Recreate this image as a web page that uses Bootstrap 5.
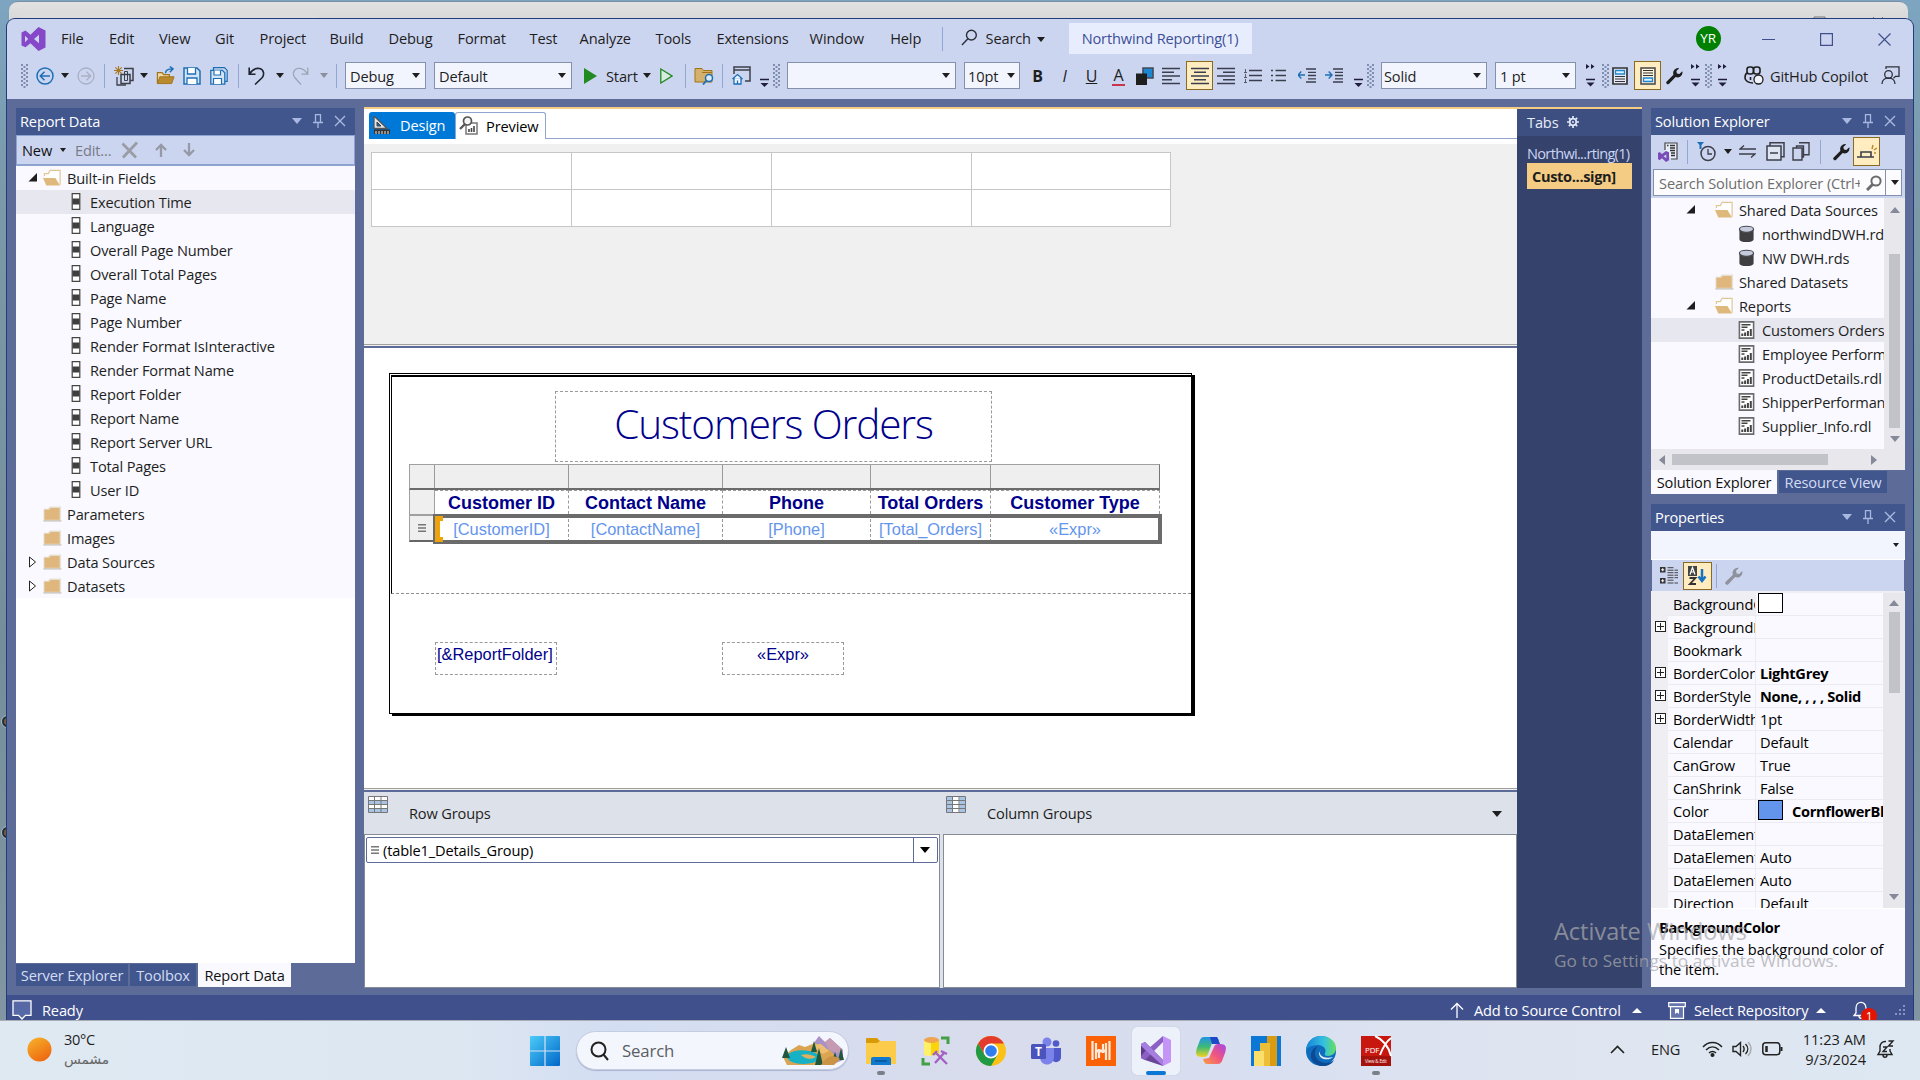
<!DOCTYPE html>
<html lang="en">
<head>
<meta charset="utf-8">
<title>Northwind Reporting(1) - Visual Studio</title>
<link href="https://cdn.jsdelivr.net/npm/bootstrap@5.3.0/dist/css/bootstrap.min.css" rel="stylesheet">
<script src="https://cdn.jsdelivr.net/npm/bootstrap@5.3.0/dist/js/bootstrap.bundle.min.js"></script>
<style>
:root{--shell:#5d6b99;--bar:#ccd5f0;--title:#40568d;--pane:#f9f9ff;--status:#40508d;--gold:#f5cc84}
body{width:1920px;height:1080px;overflow:hidden;font:14.6px/20px "Open Sans","Noto Sans",sans-serif;letter-spacing:-.15px;color:#1e1e1e;background:linear-gradient(#7da5c1,#7b99a8 18%,#768e9c 60%,#8397a3);white-space:nowrap}
svg{display:block;flex:none;overflow:visible}
.s20{width:20px;height:20px}.s16{width:16px;height:16px}
.behind{left:9px;top:1px;width:1899px;height:40px;background:linear-gradient(#e2e2e2,#cacaca);border-radius:9px 9px 0 0;border-top:1px solid #7d8fa5}
.behind .ghost-tab{margin:12px 0 0 11px;width:300px;height:20px;background:#dcdcdc;border-radius:8px}
.ghost-btns{left:1801px;top:14px}
.vs{margin:18px 0 0 6px;width:1908px;height:1002px;border:1px solid #203c7c;border-bottom:0;border-radius:9px 9px 0 0;background:var(--shell);overflow:hidden;position:relative}
.menubar{height:40px;background:var(--bar);display:grid;align-items:center;padding-left:14px;
grid-template-columns:40px 48px 50px 56px 44.6px 70px 59px 69px 72px 50px 76px 61px 93px 80.6px 51.4px 19px 25px 51px 32px 627px 66px 58px 58px 30px}
.menubar>span{margin-top:-2px}
.menubar>.proj{background:#e8edfd;color:#3b4f97;width:183px;height:31px;line-height:31px;text-align:center;margin-top:-1px}
.menubar>.yr{width:25px;height:25px;background:#008000;color:#fff;border-radius:50%;text-align:center;line-height:25px;font-size:13.5px;margin-top:-1px}
.tools{height:40px;background:var(--bar);display:grid;align-items:center;padding:0 0 7px 14px;
grid-template-columns:15px 25px 16px 27px 10px 26px 16px 27px 27px 28px 10px 28px 16px 28px 16px 9px 89px 150px 22px 37px 17px 25px 9px 28px 10px 28px 13px 14px 177px 67px 27px 27px 27px 24px 26px 24px 31px 27px 27px 27px 27px 29px 13px 14px 114px 91px 16px 10px 22px 32px 25px 14px 13px 26px 26px 111px 24px}
.vsep{width:1px;height:24px;background:#92a7d3}
.combo{height:27px;background:#f2f5fe;border:1px solid #8390ae;padding:0 5px 0 4px;display:flex;align-items:center;justify-content:space-between}
.w81{width:81px}.w138{width:138px}.w169{width:169px}.w56{width:56px;padding:0 4px 0 3px}.w106{width:106px;padding-left:2px}
.dd{width:0;height:0;border:4px solid transparent;border-top:5px solid #1e1e1e;border-bottom:0}
.dd.fade1{border-top-color:#8b8f9c}
.dd.pale{border-width:6px 5px 0;border-top-color:#a9b8e0}
.dd.big{border-width:6px 5px 0;border-top-color:#000}
.dd.tiny{border-width:4px 3px 0}
.du{width:0;height:0;border:5px solid transparent;border-bottom:5px solid #fff;border-top:0}
.on{background:#ffecc0;border:1px solid #8a6a1f;width:27px;height:29px;display:flex;align-items:center;justify-content:center}
.grip{width:7px;height:24px;background:radial-gradient(circle at 1px 1px,#7f8db0 1px,transparent 1.2px) 0 0/5px 4px,radial-gradient(circle at 1px 1px,#7f8db0 1px,transparent 1.2px) 2.5px 2px/5px 4px}
.fmt{width:13px;text-align:center;font-size:16px}
.fontcol{border-bottom:2px solid #c8364a;line-height:18px}
.work{height:896px;display:flex}
.left-col{margin:9px 0 0 9px;width:339px}
.pane-title{height:27px;background:var(--title);color:#fff;display:flex;align-items:center;padding:0 9px 2px 4px;gap:11px}
.rd-tools{height:31px;background:var(--bar);border:1px solid #8fa3d0;border-width:1px 1px 2px;padding-left:5px;color:#111}
.rd-edit{color:#777b86;margin:0 10px 0 9px}
.tree{background:var(--pane)}
.tnode{height:24px;display:flex;align-items:center;padding-bottom:1px}
.tnode.sel{background:#e7e7ef}
.tnode .exp{width:10px;margin-left:12px;margin-right:5px}
.tnode .fold{margin-right:5px}
.tnode.kid{padding-left:55px}
.tnode.kid svg{margin-right:9px}
.rd-blank{height:365px;background:#fff}
.btabs{display:flex;gap:2px;height:24px}
.btabs>span{background:var(--title);color:#d4dcf4;height:22px;margin-top:1px;line-height:22px;text-align:center}
.btabs>.act{background:var(--pane);color:#111;height:24px;margin-top:0;line-height:24px}
.w112{width:112px}.w66{width:66px}.w93{width:93px}.w126{width:126px}.w108{width:108px}
.center{margin:8px 0 0 9px;width:1278px;border-top:2px solid var(--gold);height:881px;display:flex}
.doc{width:1153px}
.viewtabs{height:35px;background:#fff;display:flex;padding:3px 0 5px 5px;align-items:stretch}
.vt{display:flex;align-items:center;border-radius:3px 3px 0 0;padding-bottom:1px}
.vt.design{width:86px;background:#0078d7;color:#fff;padding-left:4px;gap:9px}
.vt.preview{width:91px;border:1px solid #8fa5cf;border-bottom:0;padding-left:3px;gap:8px;color:#000}
.vtrest{flex:1;border-bottom:1px solid #94a6cd}
.params{height:200px;background:#f0f0f0;padding:8px 0 0 7px}
.pgrid{display:grid;grid-template:37px 37px/200px 200px 200px 199px;width:800px;border:solid #c6c6c6;border-width:1px 0 0 1px}
.pgrid>div{background:#fff;border:solid #c6c6c6;border-width:0 1px 1px 0}
.split{height:4px;border-top:1px solid #a0a0a0;border-bottom:2px solid var(--shell);background:#f0f0f0}
.canvas{height:440px;background:#fff;position:relative}
.page{left:25px;top:25px;width:803px;height:341px;border:1px solid #000;box-shadow:3px 2px 0 #000;background:#fff}
.page .bodyarea{height:219px;border-left:1px solid #000;border-top:2px solid #000;border-bottom:1px dashed #8d8d8d;margin:1px 0 0 1px}
.tbx{border:1px dashed #9a9a9a;color:#00008b;font-family:"Liberation Sans",Arial,sans-serif;letter-spacing:0;text-align:center}
.rtitle{left:191px;top:43px;width:437px;height:71px;font:300 40.5px/64px "Open Sans",sans-serif;letter-spacing:-1.1px}
.tablix{left:45px;top:116px;width:751px;letter-spacing:0;font-family:"Liberation Sans",Arial,sans-serif}
.trow{display:grid;grid-template-columns:26px 134px 154px 148px 120px 169px;text-align:center}
.trow>*{overflow:hidden}
.th1{height:26px;border:1px solid #a0a0a0;border-bottom:2px solid #6b6b6b;border-right-color:#777;grid-template-columns:25px 134px 154px 148px 120px 168px}
.th1>*{background:#efefef;border-right:1px solid #9a9a9a}.th1>:last-child{border:0}
.th2{height:24px;font-weight:700;font-size:18px;line-height:26px;color:#00008b}
.th2>*,.th3>*{border-right:1px dashed #999}
.hcell{background:#efefef;border:solid #a0a0a0!important;border-width:0 1px 0 1px!important}
.th2>:nth-child(n+2){border-top:1px dashed #999;line-height:25px}
.th3{height:28px;font-size:16.4px;line-height:30px;color:#6495ed}
.th3 .hcell{border-width:2px 1px 2px 1px!important;border-bottom-color:#666!important;height:28px;display:flex;align-items:center;justify-content:center}
.selrow{left:24px;top:50px;width:729px;height:30px;border:4px solid #6b6b6b}
.selmark{left:-2px;top:-2px;width:8px;height:26px;border:solid #eea30c;border-width:5px 0 5px 5px}
.rfolder,.rexpr{top:294px;width:122px;height:33px;font-size:16.4px;line-height:23px}
.rfolder{left:71px;text-align:left;padding-left:1px}
.rexpr{left:358px}
.groups{height:42px;background:#dde1e9;display:flex}
.groups>div{display:flex}
.rowg-half{width:578px}
.glabel{margin:11px 0 0 21px;line-height:20px}
.gdd{margin:19px 15px 0 auto;border-width:6px 5px 0}
.gboxes{height:154px;display:flex;gap:3px;background:#dde1e9}
.gbox{background:#fff;border:1px solid #868b95;flex:1}
.gbox:first-child{flex:0 0 575.5px}
.gcombo{margin:2px 1px 0;height:26px;border:1px solid #5d6b99;border-radius:2px;color:#000}
.gbtn{margin-left:auto;border-left:1px solid #5d6b99;width:24px;height:24px;display:flex;align-items:center;justify-content:center}
.tabwell{width:125px;background:#35426b;color:#cad4f3;height:879px}
.tabwell .hd{height:27px;background:#3d4f80;padding:0 0 2px 10px;gap:9px;color:#e8ecfa}
.nwr{padding:7px 0 0 10px;height:27px;letter-spacing:-.7px}
.custo{margin:0 0 0 10px;width:105px;height:26px;background:var(--gold);color:#1e1e1e;font-weight:700;padding-left:5px;line-height:26px;letter-spacing:-.35px}
.right-col{margin:9px 0 0 9px;width:254px}
.se-tools{height:33px;background:var(--bar);display:grid;align-items:center;padding-left:7px;grid-template-columns:29px 10px 27px 15px 27px 26px 28px 9px 24px 28px}
.se-search{height:30px;background:var(--bar);padding:1px 3px 2px 2px}
.se-search>div{height:27px;width:249px;background:#fcfcfe;border:1px solid #8390ae;color:#6d6d6d}
.se-search .txt{width:206px;overflow:hidden;padding-left:5px;letter-spacing:-.12px}
.se-search .txt+svg{margin-left:6px}
.sdiv{width:1px;height:25px;background:#8390ae;margin:0 5px 0 3px}
.se-body{height:251px;display:flex}
.se-body .tree{width:233px;overflow:hidden}
.se-body .tnode .exp{margin-left:35px;margin-right:19px}
.se-body .tnode.kid{padding-left:87px}
.se-body .tnode.kid svg{margin-right:7px}
.scrl{background:#e8e8ec;width:21px;display:flex;flex-direction:column;align-items:center}
.thumb{background:#c2c3c9;width:11px}
.se-v .tri.u{margin-top:9px}.se-v .thumb{height:174px;margin:41px 0 8px}
.pr-v{width:22px}.pr-v .tri.u{margin-top:7px}.pr-v .thumb{height:81px;margin:6px 0 201px}
.tri{border:5px solid transparent;width:0;height:0}
.tri.u{border-width:0 5px 6px;border-bottom-color:#868999}.tri.d{border-width:6px 5px 0;border-top-color:#868999}
.tri.l{border-width:5px 6px 5px 0;border-right-color:#868999}.tri.r{border-width:5px 0 5px 6px;border-left-color:#868999}
.hs{height:21px;background:#e8e8ec;padding-left:8px}
.hs .thumb{width:156px;height:11px;margin:0 43px 0 7px}
.mt10{margin-top:10px}
.pdrop{height:29px;background:#f2f5fe;padding-right:6px;border-bottom:1px solid #fff}
.ptools{height:31px;background:var(--bar);margin:0 1px;padding:1px 0 1px 8px}
.azbtn{width:29px;height:28px;margin-left:1px}
.dim{color:#8f929c}
.pbody{height:317px;display:flex;background:#eeeef3;color:#000;padding-top:2px}
.plist{width:232px;overflow:hidden}
.prow{display:grid;grid-template-columns:17px 88px 127px;height:23px}
.prow>*{overflow:hidden;line-height:22px}
.prow .n{background:var(--pane);border:solid #ebebf1;border-width:0 1px 1px 0;padding-left:5px}
.prow:first-child .n{background:#eeeef3}
.prow .v{background:var(--pane);border-bottom:1px solid #ebebf1;padding-left:4px;display:flex}
.prow .b{font-weight:700;letter-spacing:-.3px}
.plus{width:11px;height:11px;border:1px solid #222;margin:5px 0 0 4px;background:linear-gradient(#222,#222) 50% 50%/7px 1px no-repeat,linear-gradient(#222,#222) 50% 50%/1px 7px no-repeat #fff}
.sw{width:25px;height:20px;border:1px solid #000;margin:0 9px 0 -2px;flex:none}
.pdesc{height:79px;background:var(--pane);padding:8px 0 0 8px;color:#000;border-top:1px solid #fff}
.pdesc b{letter-spacing:-.35px}
.dtxt{white-space:normal;margin-top:2px;letter-spacing:-.05px}
.statusbar{height:25px;background:var(--status);color:#fff;overflow:hidden;padding:5px 6px 0 5px}
.rdy{margin-left:10px}
.stright{margin-left:auto;display:grid;align-items:center;grid-template-columns:24px 158px 36px 26px 122px 37px 42px 12px}
.cnt{left:8px;top:7px;width:16px;height:16px;border-radius:50%;background:#e51400;color:#fff;font-size:12px;line-height:17px;text-align:center}
.water{left:1547px;top:896px;color:#a9a9ad;opacity:.72;font-size:23.5px;line-height:32px;letter-spacing:0}
.water div+div{font-size:17.2px;line-height:28px;letter-spacing:.08px}
.taskbar{height:60px;background:linear-gradient(90deg,#dfe9f2 0,#dde7f2 24%,#d3def2 31%,#d6ddf0 40%,#d8dcec 52%,#d8dff0 66%,#dfe5f0 80%,#dde8f2);border-top:1px solid #a9adb7;position:relative}
.weather{left:27px;top:8px;line-height:20px;letter-spacing:-.3px}
.arab{font-family:"DejaVu Sans","Noto Sans",sans-serif;font-size:13.8px;color:#666}
.pill{width:273px;height:39px;border-radius:20px;background:#f3f6fc;border:1px solid #c5cde1;box-shadow:0 1px 1px #aab4cf;font-size:16.8px;color:#5b5d63}
.pill .mag{margin:0 13px}
.apps{left:530px;top:0;height:59px}
.applist{margin-left:8px}
.app{width:30px;height:30px}
.appbox{width:48px;height:48px;display:flex;align-items:center;justify-content:center;position:relative;margin-right:7px}
.appbox.live{background:#edf1fa;border-radius:5px;box-shadow:0 0 1px #a8afc2}
.appbox i{position:absolute;bottom:0;height:4px;width:8px;border-radius:2px;background:#7b7f88}
.appbox.live i{width:20px;background:#0a78d4}
.tray{left:1610px;top:8px;line-height:20px}
.tgrid{display:grid;align-items:center;height:40px;grid-template-columns:41px 51px 30px 30px 21px 83px 12px}
.clk{text-align:right;letter-spacing:0}
.tgrid .order-last{margin-left:11px}
.edge-mark{left:2px;width:10px;height:11px;border:2px solid #22303a;border-radius:50%;background:#7a5a3c;box-shadow:0 0 0 1px #a5b6c2}
.em1{top:716px}.em2{top:827px}
</style>
</head>
<body>
<svg width="0" height="0" class="position-absolute" fill="none" stroke-linecap="butt">
<defs>
<symbol id="vslogo" viewBox="0 0 24 24"><path fill="#8647c8" fill-rule="evenodd" d="M17 0l7 3.400v17.200L17 24l-8-7.700-5 4L0 18.400V5.600l4-2L9 7.700zM17.500 7.800L12.500 12l5 4.200zM3.500 8.800v6.400L6.700 12z"/></symbol>
<symbol id="search" viewBox="0 0 18 18"><g fill="none" stroke="#2b2f3a" stroke-width="1.500"><circle cx="11" cy="6.500" r="5.200"/><path d="M7.300 10.300L1 17"/></g></symbol>
<symbol id="min" viewBox="0 0 13 13"><path d="M0 6.500h13" stroke="#414f8c" stroke-width="1.200"/></symbol>
<symbol id="max" viewBox="0 0 13 13"><path d="M.6.600h11.800v11.800H.6z" fill="none" stroke="#414f8c" stroke-width="1.200"/></symbol>
<symbol id="cls" viewBox="0 0 13 13"><path d="M.5.500l12 12M12.500.500l-12 12" stroke="#414f8c" stroke-width="1.200"/></symbol>
<symbol id="back" viewBox="0 0 18 18"><g fill="none" stroke="#1c6fb5" stroke-width="1.500"><circle cx="9" cy="9" r="8"/><path d="M14 9H4.500M8.500 4.800L4.300 9l4.200 4.200"/></g></symbol>
<symbol id="fwd" viewBox="0 0 18 18"><g fill="none" stroke="#a9b0c4" stroke-width="1.300"><circle cx="9" cy="9" r="8"/><path d="M4 9h9.500M9.500 4.800L13.700 9l-4.200 4.200"/></g></symbol>
<symbol id="newp" viewBox="0 0 20 20"><g fill="none"><path d="M4.500 0v9M0 4.500h9M1.300 1.300l6.400 6.400M7.700 1.300L1.300 7.700" stroke="#a9781c" stroke-width="1.100"/><path d="M10 2.500h9v12h-3M7 8.500h9v9H7z" stroke="#3c3f48" stroke-width="1.500"/><path d="M3 11v8h9" stroke="#3c3f48" stroke-width="1.300"/><path d="M10.500 5.500h3v9h-3z" stroke="#3c3f48"/></g></symbol>
<symbol id="open" viewBox="0 0 20 20"><path d="M1.500 18V6.500h5l1.500 2h6V11" fill="#f2dba8" stroke="#a1741b" stroke-width="1.300"/><path d="M1.500 18L4 10.800h15L16.500 18z" fill="#b98a2e" stroke="#a1741b"/><path d="M10 7c0-3 2-4.500 7-4.500M14.500 0l3.500 2.500L14.500 6" fill="none" stroke="#1c6fb5" stroke-width="1.500"/></symbol>
<symbol id="save" viewBox="0 0 18 18"><path d="M1 1h13l3 3v13H1z" fill="#d5e4f5" stroke="#1c6fb5" stroke-width="1.500"/><path d="M4.500 1v6h8V1M4 17v-6h10v6" fill="#fff" stroke="#1c6fb5" stroke-width="1.300"/></symbol>
<symbol id="saveall" viewBox="0 0 18 18"><path d="M3.500 3V.700h11l2.700 2.700v11H15" fill="none" stroke="#1c6fb5" stroke-width="1.200"/><path d="M.8 3.300h11.500l2.500 2.500v11.400H.800z" fill="#d5e4f5" stroke="#1c6fb5" stroke-width="1.300"/><path d="M4 3.500V8h6.500V3.500M3.500 17v-5.500h8V17" fill="#fff" stroke="#1c6fb5" stroke-width="1.200"/></symbol>
<symbol id="undo" viewBox="0 0 17 18"><path d="M1.200.500v6.700h6.300M1.500 7C4 3 7.500.800 11.500 1.500c4.500 1 5 6 2.800 9L7 17.500" fill="none" stroke="#1e2430" stroke-width="1.600"/></symbol>
<symbol id="redo" viewBox="0 0 17 18"><path d="M15.800.500v6.700H9.500M15.500 7C13 3 9.500.800 5.500 1.500c-4.500 1-5 6-2.800 9L9 17.500" fill="none" stroke="#9ba2b5" stroke-width="1.200"/></symbol>
<symbol id="play" viewBox="0 0 13 16"><path d="M0 0l13 8L0 16z" fill="#218a21"/></symbol>
<symbol id="playo" viewBox="0 0 13 16"><path d="M.8 1L12 8 .8 15z" fill="#d9ecdf" stroke="#218a21" stroke-width="1.300"/></symbol>
<symbol id="ffind" viewBox="0 0 20 18"><path d="M1 15V1.500h7l1.500 2H18V15z" fill="#d4b06a" stroke="#a1741b"/><path d="M8 5.500h10" stroke="#a1741b"/><circle cx="15" cy="11" r="3.500" fill="#dcebfa" stroke="#1c6fb5" stroke-width="1.500"/><path d="M12.500 13.500L9 17.500" stroke="#1c6fb5" stroke-width="1.800"/></symbol>
<symbol id="whome" viewBox="0 0 19 19"><path d="M2 8V1h16v14h-5M2 4h16" fill="none" stroke="#3c3f48" stroke-width="1.500"/><path d="M.5 13L5.500 8.500l5 4.500M2 12v6h7v-6M5.500 18v-3.500" fill="#f2f7ff" stroke="#1c6fb5" stroke-width="1.300"/></symbol>
<symbol id="ovf" viewBox="0 0 9 24"><path d="M0 15.500h9" stroke="#1e1e3c" stroke-width="1.500"/><path d="M.5 19h8l-4 4z" fill="#1e1e3c"/></symbol>
<symbol id="ovf2" viewBox="0 0 9 24"><path d="M0 0l3.500 2.500L0 5zM5 0l3.500 2.500L5 5z" fill="#1e1e3c"/><path d="M0 15.500h9" stroke="#1e1e3c" stroke-width="1.500"/><path d="M.5 18.500h8l-4 4z" fill="#1e1e3c"/></symbol>
<symbol id="cols" viewBox="0 0 18 18"><path d="M7 1h10v10H7z" fill="#1c86d1" stroke="#444a58" stroke-width="1.600"/><path d="M0 6.500h11V18H0z" fill="#1e1e1e"/></symbol>
<symbol id="al" viewBox="0 0 18 18"><path d="M0 1.500h18M0 5.200h12M0 9h18M0 12.800h10M0 16.500h18" stroke="#3a3f4e" stroke-width="1.400"/></symbol>
<symbol id="ac" viewBox="0 0 18 18"><path d="M0 1.500h18M3 5.200h12M0 9h18M3 12.800h12M0 16.500h18" stroke="#3a3f4e" stroke-width="1.400"/></symbol>
<symbol id="ar" viewBox="0 0 18 18"><path d="M0 1.500h18M6 5.200h12M0 9h18M6 12.800h12M0 16.500h18" stroke="#3a3f4e" stroke-width="1.400"/></symbol>
<symbol id="ol" viewBox="0 0 18 15"><path d="M5 2.500h13M5 7.500h13M5 12.500h13" stroke="#3a3f4e" stroke-width="1.400"/><path d="M1.500 1v3.500M1.500 6v3.500M1.500 11v3.500M0 4.500h3M0 9.500h3M0 14.500h3" stroke="#3a3f4e" stroke-width=".8"/></symbol>
<symbol id="ul" viewBox="0 0 15 15"><path d="M4.500 2.500h11M4.500 7.500h11M4.500 12.500h11M0 2.500h2M0 7.500h2M0 12.500h2" stroke="#3a3f4e" stroke-width="1.400"/></symbol>
<symbol id="outd" viewBox="0 0 18 15"><path d="M0 7h7M3.300 3.500L0 7l3.300 3.500" fill="none" stroke="#1c6fb5" stroke-width="1.400"/><path d="M8 1h10M10 4.300h8M10 7.500h8M10 10.800h8M8 14h10" stroke="#3a3f4e" stroke-width="1.300"/></symbol>
<symbol id="ind" viewBox="0 0 18 15"><path d="M0 7h7M3.700 3.500L7 7l-3.300 3.500" fill="none" stroke="#1c6fb5" stroke-width="1.400"/><path d="M8 1h10M10 4.300h8M10 7.500h8M10 10.800h8M8 14h10" stroke="#3a3f4e" stroke-width="1.300"/></symbol>
<symbol id="hdr" viewBox="0 0 16 18"><path d="M1 1h14v16H1z" fill="#e6ebf7" stroke="#333" stroke-width="1.700"/><path d="M3.500 3.500h9v3.500h-9z" fill="#e3f1ff" stroke="#1c86d1" stroke-width="1.300"/><path d="M3 9.500h10M3 12h10M3 14.500h10" stroke="#333" stroke-width="1.200"/></symbol>
<symbol id="ftr" viewBox="0 0 16 18"><path d="M1 1h14v16H1z" fill="#fdf3dc" stroke="#444" stroke-width="1.500"/><path d="M3.500 11h9v3.500h-9z" fill="#e3f1ff" stroke="#1c86d1" stroke-width="1.300"/><path d="M3 3.500h10M3 6h10M3 8.500h10" stroke="#333" stroke-width="1.200"/></symbol>
<symbol id="wrench" viewBox="0 0 18 18"><path d="M17.500 5.500a5.300 5.300 0 0 1-7.300 4.600L3.300 17.200a1.700 1.700 0 0 1-2.500-2.500L7.900 7.800A5.300 5.300 0 0 1 14 .8l-3 3 .6 2.600 2.600.6 3-3z" fill="currentColor"/></symbol>
<symbol id="copilot" viewBox="0 0 20 19"><g fill="none" stroke="#1e1e1e" stroke-width="1.600"><rect x="3" y="1" width="6.500" height="7" rx="2.500"/><rect x="9.500" y="1" width="6.500" height="7" rx="2.500"/><path d="M3 7c-2 1-2 3-2 5 0 3 4 5 8 5M6.500 11v3"/></g><circle cx="14.500" cy="13.500" r="4.500" fill="#f0f3fc" stroke="#1e1e1e" stroke-width="1.300"/></symbol>
<symbol id="feed" viewBox="0 0 19 19"><g fill="none" stroke="#2c303b" stroke-width="1.300"><circle cx="7.500" cy="8.500" r="3.800"/><path d="M1 18c0-4 3-6 6.500-6s6.500 2 6.500 6M5 3V.8h13v9.500h-3.500l-2 2"/></g></symbol>
<symbol id="pin" viewBox="0 0 10 14"><path d="M2.500 0v8.500M7.500 0v8.500M2 .6h6M0 8.500h10M5 8.500V14" fill="none" stroke="#a9b8e0" stroke-width="1.300"/></symbol>
<symbol id="pcls" viewBox="0 0 12 12"><path d="M1 1l10 10M11 1L1 11" stroke="#a9b8e0" stroke-width="1.400"/></symbol>
<symbol id="delx" viewBox="0 0 18 18"><path d="M1.500 2.500L15 16.500M16 1.500L2 16.500" stroke="#9a9da6" stroke-width="2.800"/></symbol>
<symbol id="up" viewBox="0 0 12 14"><path d="M6 14V2M1 7l5-5 5 5" fill="none" stroke="#969aa6" stroke-width="2.300"/></symbol>
<symbol id="down" viewBox="0 0 12 14"><path d="M6 0v12M1 7l5 5 5-5" fill="none" stroke="#969aa6" stroke-width="2.300"/></symbol>
<symbol id="fopen" viewBox="0 0 20 18"><path d="M1.500 7V4.500h4l2-3.500h10.500v15" fill="#fff" stroke="#e2c796" stroke-width="1.300"/><path d="M0 9h13l5 8H3.500z" fill="#dfb87c"/></symbol>
<symbol id="fold" viewBox="0 0 20 18"><path d="M.5 3.500L5 3.500 7 1h12v15.500H.5z" fill="#e7e0d2"/><path d="M1.500 4.500h5L8 2.800h9.500V15h-16z" fill="#dfb67c"/><path d="M.5 16.300h19" stroke="#bdbab5"/></symbol>
<symbol id="field" viewBox="0 0 9 17"><path d="M.7.700h7.600v15.600H.7z" fill="#fff" stroke="#444" stroke-width="1.200"/><path d="M1 5.500h7v6H1z" fill="#3f3f3f"/></symbol>
<symbol id="xo" viewBox="0 0 10 10"><path d="M9 0v8.500H.5z" fill="#1e1e1e"/></symbol>
<symbol id="xc" viewBox="0 0 10 12"><path d="M1.500 1v10l6-5z" fill="#fff" stroke="#222"/></symbol>
<symbol id="db" viewBox="0 0 18 18"><path d="M1.500 3.500v11c0 4 15 4 15 0v-11z" fill="#3f3f42"/><ellipse cx="9" cy="4" rx="7.500" ry="3.200" fill="#c5cbdc" stroke="#4a4a4d" stroke-width="1.300"/></symbol>
<symbol id="rdl" viewBox="0 0 16 18"><path d="M.9.900h14.200v16.200H.9z" fill="#fff" stroke="#6b6b6f" stroke-width="1.600"/><path d="M3 3.700h9M3 6.300h6M3 9h3" stroke="#444" stroke-width="1.400"/><path d="M3.800 15v-2.500M6.600 15v-3.500M9.400 15v-5M12.300 15V8" stroke="#444" stroke-width="2"/></symbol>
<symbol id="ruler" viewBox="0 0 18 18"><path d="M1 0v12.500h13z" fill="#e6e6e6" stroke="#555" stroke-width="1.300"/><path d="M4 6v4h4z" fill="#0078d7" stroke="#3c3c3c"/><path d="M1 13.500h16V18H1z" fill="#333"/><path d="M3 18v-3M6 18v-3M9 18v-3M12 18v-3M15 18v-3" stroke="#eee"/></symbol>
<symbol id="prev" viewBox="0 0 19 19"><path d="M7 7h11v11H7z" fill="#fff" stroke="#777" stroke-width="1.500"/><path d="M10 16v-3M12.500 16v-4M15 16v-6" stroke="#444" stroke-width="1.600"/><circle cx="8.500" cy="5" r="4" fill="#f5f5f5" stroke="#555" stroke-width="1.700"/><path d="M6 8l-5 5" stroke="#555" stroke-width="2.300"/></symbol>
<symbol id="gear" viewBox="0 0 12 12"><circle cx="6" cy="6" r="3.300" fill="none" stroke="#dfe5f8" stroke-width="1.800"/><path d="M6 0v3M6 9v3M0 6h3M9 6h3M1.800 1.800l2 2M8.200 8.200l2 2M10.200 1.800l-2 2M3.800 8.200l-2 2" stroke="#dfe5f8" stroke-width="1.700"/><circle cx="6" cy="6" r="1" fill="#dfe5f8"/></symbol>
<symbol id="rowg" viewBox="0 0 20 17"><path d="M.5.500h19v16H.5z" fill="#fff" stroke="#777"/><path d="M1 5h18v3.500H1zM1 12.500h18V16H1z" fill="#a9c3e4"/><path d="M0 4.500h20M0 8.500h20M0 12.500h20M6.500 0v17M13 0v17" stroke="#777"/></symbol>
<symbol id="colg" viewBox="0 0 20 17"><path d="M.5.500h19v16H.5z" fill="#fff" stroke="#777"/><path d="M1 1h5.500v15H1zM13.500 1H19v15h-5.500z" fill="#a9c3e4"/><path d="M0 4.500h20M0 8.500h20M0 12.500h20M6.500 0v17M13 0v17" stroke="#777"/></symbol>
<symbol id="burg" viewBox="0 0 8 8"><path d="M0 .700h8M0 4h8M0 7.300h8" stroke="#777" stroke-width="1.400"/></symbol>
<symbol id="vsdoc" viewBox="0 0 20 20"><path d="M7 8V1h12v16h-6" fill="#e9edf8" stroke="#444" stroke-width="1.200"/><path d="M9 3.500h1.500M12 3.500h5M12 6h5M12 8.500h5M13 11h4M13 13.500h4" stroke="#333" stroke-width="1.300"/><path d="M8 9l3 1.300v8L8 20l-4-3.800-2.500 2L0 17v-6l1.500-1L4 12zM8.300 12.500L5.500 14.300l2.800 2z" fill="#7a4cb8" fill-rule="evenodd"/></symbol>
<symbol id="clock" viewBox="0 0 20 20"><path d="M0 0h7L4.500 3v4h-2V3z" fill="#1c6fb5"/><circle cx="11" cy="11.500" r="7" fill="none" stroke="#3c3f48" stroke-width="1.500"/><path d="M11 7v5h4" fill="none" stroke="#3c3f48" stroke-width="1.300"/></symbol>
<symbol id="swap" viewBox="0 0 17 13"><path d="M17 4H1l4-3.500M0 9h16l-4 3.500" fill="none" stroke="#3c3f48" stroke-width="1.400"/></symbol>
<symbol id="coll" viewBox="0 0 19 19"><path d="M4 4V.8h14v14h-3" fill="none" stroke="#3c3f48" stroke-width="1.500"/><path d="M1 4h14v14H1zM4 11h8" fill="#dfe4f2" stroke="#3c3f48" stroke-width="1.500"/></symbol>
<symbol id="copies" viewBox="0 0 18 19"><path d="M7 .800h10v12h-5.500" fill="none" stroke="#3c3f48" stroke-width="1.400"/><path d="M4.500 6V4H11.500v11H10M1 6h9v12H1z" fill="none" stroke="#3c3f48" stroke-width="1.400"/></symbol>
<symbol id="prevw" viewBox="0 0 20 16"><path d="M4 8h10v5H4zM0 13h17" fill="none" stroke="#3c3f48" stroke-width="1.600"/><path d="M15 5l1-4M17 6l3-2M17 9h2" stroke="#b58a24" stroke-width="1.400"/></symbol>
<symbol id="magn" viewBox="0 0 16 16"><circle cx="10" cy="6" r="4.600" fill="none" stroke="#6b6b6b" stroke-width="2"/><path d="M6.500 9.500L1 15" stroke="#6b6b6b" stroke-width="3"/></symbol>
<symbol id="cat" viewBox="0 0 18 17"><path d="M0 0h5.500v5.500H0zM0 11h5.500v5.500H0z" fill="#333"/><path d="M1.200 2.800h3M2.700 1.200v3M1.200 13.800h3M2.700 12.200v3" stroke="#fff"/><path d="M7.500.700h6M7.500 3.200h6M7.500 5.700h6M7.500 8.200h6M7.500 10.700h6M7.500 13.200h6M7.500 16h6M14.500 3.200H18M14.500 5.700H18M14.500 8.200H18M14.500 10.700H18M14.500 16H18" stroke="#444"/></symbol>
<symbol id="az" viewBox="0 0 19 19"><path d="M0 0h9v10H0z" fill="#444"/><path d="M2 8.500l2.500-7 2.500 7M3 6h3" fill="none" stroke="#fff" stroke-width="1.200"/><path d="M1.500 12h6l-5.500 6h6" fill="none" stroke="#333" stroke-width="1.800"/><path d="M14 3v11M10.500 10.500L14 15l3.500-4.500" fill="none" stroke="#1573c4" stroke-width="2.500"/></symbol>
<symbol id="msg" viewBox="0 0 20 20"><path d="M1 .800h18v14.500h-5.500L10 19l-3.500-3.700H1z" fill="#5669a6" stroke="#fff" stroke-width="1.300"/></symbol>
<symbol id="arru" viewBox="0 0 14 16"><path d="M7 16V1.500M1 7.500l6-6 6 6" fill="none" stroke="#fff" stroke-width="1.300"/></symbol>
<symbol id="repo" viewBox="0 0 18 17"><path d="M.7.700h16.600v4H.7zM2.500 5v11.300h13V5" fill="#6676ac" stroke="#fff" stroke-width="1.200"/><path d="M7 7v5l2-1.500 2 1.500V7z" fill="#fff"/></symbol>
<symbol id="bell" viewBox="0 0 16 18"><path d="M1 14.500h14L13 12V7C13 -.5 3 -.5 3 7v5zM6 15c0 3 4 3 4 0" fill="none" stroke="#fff" stroke-width="1.300"/></symbol>
</defs>
</svg>

<div class="behind position-absolute overflow-hidden"><div class="ghost-tab"></div>
<svg class="ghost-btns position-absolute" width="90" height="14" fill="none" stroke="#777"><path d="M4 1h11v12H4zM63 1l10 11M73 1L63 12"/></svg></div>
<div class="edge-mark em1 position-absolute"></div><div class="edge-mark em2 position-absolute"></div>

<div class="vs">
  <div class="menubar">
    <svg width="25" height="24"><use href="#vslogo"/></svg>
    <span>File</span><span>Edit</span><span>View</span><span>Git</span><span>Project</span><span>Build</span><span>Debug</span><span>Format</span><span>Test</span><span>Analyze</span><span>Tools</span><span>Extensions</span><span>Window</span><span>Help</span>
    <i class="vsep"></i><svg width="17" height="17" class="mb-1"><use href="#search"/></svg><span>Search</span><i class="dd"></i>
    <span class="proj">Northwind Reporting(1)</span>
    <span class="yr">YR</span><svg width="13" height="13"><use href="#min"/></svg><svg width="13" height="13"><use href="#max"/></svg><svg width="13" height="13"><use href="#cls"/></svg>
  </div>
  <div class="tools">
    <i class="grip"></i><svg width="18" height="18"><use href="#back"/></svg><i class="dd"></i><svg width="18" height="18"><use href="#fwd"/></svg><i class="vsep"></i>
    <svg class="s20"><use href="#newp"/></svg><i class="dd"></i><svg width="19" height="20"><use href="#open"/></svg><svg width="18" height="18"><use href="#save"/></svg><svg width="18" height="18"><use href="#saveall"/></svg><i class="vsep"></i>
    <svg width="17" height="18"><use href="#undo"/></svg><i class="dd"></i><svg width="17" height="18"><use href="#redo"/></svg><i class="dd fade1"></i><i class="vsep"></i>
    <div class="combo w81">Debug<i class="dd"></i></div><div class="combo w138">Default<i class="dd"></i></div>
    <svg width="13" height="16"><use href="#play"/></svg><span>Start</span><i class="dd"></i><svg width="13" height="16"><use href="#playo"/></svg><i class="vsep"></i>
    <svg width="20" height="18"><use href="#ffind"/></svg><i class="vsep"></i><svg width="19" height="19"><use href="#whome"/></svg><svg width="9" height="24"><use href="#ovf"/></svg><i class="grip"></i>
    <div class="combo w169"><span></span><i class="dd"></i></div><div class="combo w56">10pt<i class="dd"></i></div>
    <b class="fmt">B</b><i class="fmt">I</i><u class="fmt">U</u><span class="fmt fontcol">A</span>
    <svg width="18" height="18"><use href="#cols"/></svg><svg width="18" height="18"><use href="#al"/></svg><div class="on"><svg width="18" height="18"><use href="#ac"/></svg></div><svg width="18" height="18"><use href="#ar"/></svg>
    <svg width="18" height="15"><use href="#ol"/></svg><svg width="15" height="15"><use href="#ul"/></svg><svg width="18" height="15"><use href="#outd"/></svg><svg width="18" height="15"><use href="#ind"/></svg>
    <svg width="9" height="24"><use href="#ovf"/></svg><i class="grip"></i>
    <div class="combo w106">Solid<i class="dd"></i></div><div class="combo w81">1 pt<i class="dd"></i></div>
    <svg width="9" height="24"><use href="#ovf2"/></svg><i class="grip"></i><svg width="16" height="18"><use href="#hdr"/></svg><div class="on"><svg width="16" height="18"><use href="#ftr"/></svg></div>
    <svg width="17" height="18"><use href="#wrench"/></svg><svg width="9" height="24"><use href="#ovf2"/></svg><i class="grip"></i><svg width="9" height="24"><use href="#ovf2"/></svg>
    <svg width="20" height="19"><use href="#copilot"/></svg><span>GitHub Copilot</span><svg width="19" height="19"><use href="#feed"/></svg>
  </div>

  <div class="work">
    <div class="left-col">
      <div class="pane-title">Report Data<i class="dd pale ms-auto"></i><svg width="10" height="14"><use href="#pin"/></svg><svg width="12" height="12"><use href="#pcls"/></svg></div>
      <div class="rd-tools d-flex align-items-center">New<i class="dd tiny ms-2"></i><span class="rd-edit">Edit...</span><svg width="18" height="18"><use href="#delx"/></svg><svg width="12" height="14" class="ms-3"><use href="#up"/></svg><svg width="12" height="14" class="ms-3"><use href="#down"/></svg></div>
      <div class="tree" id="fields"></div>
      <div class="rd-blank"></div>
      <div class="btabs"><span class="w112">Server Explorer</span><span class="w66">Toolbox</span><span class="act w93">Report Data</span></div>
    </div>

    <div class="center">
      <div class="doc">
        <div class="viewtabs"><div class="vt design"><svg width="18" height="18"><use href="#ruler"/></svg>Design</div><div class="vt preview"><svg width="19" height="19"><use href="#prev"/></svg>Preview</div><div class="vtrest"></div></div>
        <div class="params"><div class="pgrid"><div></div><div></div><div></div><div></div><div></div><div></div><div></div><div></div></div></div>
        <div class="split"></div>
        <div class="canvas">
          <div class="page position-absolute"><div class="bodyarea"></div></div>
          <div class="tbx rtitle position-absolute">Customers Orders</div>
          <div class="tablix position-absolute">
            <div class="trow th1"><div></div><div></div><div></div><div></div><div></div><div></div></div>
            <div class="trow th2"><div class="hcell"></div><div>Customer ID</div><div>Contact Name</div><div>Phone</div><div>Total Orders</div><div>Customer Type</div></div>
            <div class="trow th3"><div class="hcell"><svg width="8" height="8"><use href="#burg"/></svg></div><div>[CustomerID]</div><div>[ContactName]</div><div>[Phone]</div><div>[Total_Orders]</div><div>«Expr»</div></div>
            <div class="selrow position-absolute"><div class="selmark position-absolute"></div></div>
          </div>
          <div class="tbx rfolder position-absolute">[&amp;ReportFolder]</div>
          <div class="tbx rexpr position-absolute">«Expr»</div>
        </div>
        <div class="split"></div>
        <div class="groups"><div class="rowg-half"><svg width="20" height="17" class="ms-1 mt-1"><use href="#rowg"/></svg><span class="glabel">Row Groups</span></div><div class="flex-fill"><svg width="20" height="17" class="ms-1 mt-1"><use href="#colg"/></svg><span class="glabel">Column Groups</span><i class="dd gdd"></i></div></div>
        <div class="gboxes"><div class="gbox"><div class="gcombo d-flex align-items-center ps-1"><svg width="8" height="8" class="me-1"><use href="#burg"/></svg>(table1_Details_Group)<span class="gbtn"><i class="dd big"></i></span></div></div><div class="gbox"></div></div>
      </div>
      <div class="tabwell"><div class="hd d-flex align-items-center">Tabs<svg width="12" height="12"><use href="#gear"/></svg></div><div class="nwr">Northwi...rting(1)</div><div class="custo">Custo...sign]</div></div>
    </div>

    <div class="right-col">
      <div class="pane-title">Solution Explorer<i class="dd pale ms-auto"></i><svg width="10" height="14"><use href="#pin"/></svg><svg width="12" height="12"><use href="#pcls"/></svg></div>
      <div class="se-tools"><svg class="s20"><use href="#vsdoc"/></svg><i class="vsep"></i><svg class="s20"><use href="#clock"/></svg><i class="dd"></i><svg width="17" height="13"><use href="#swap"/></svg><svg width="19" height="19"><use href="#coll"/></svg><svg width="18" height="19"><use href="#copies"/></svg><i class="vsep"></i><svg width="17" height="18" class="ms-1"><use href="#wrench"/></svg><div class="on"><svg width="20" height="16"><use href="#prevw"/></svg></div></div>
      <div class="se-search"><div class="d-flex align-items-center"><span class="txt">Search Solution Explorer (Ctrl+;)</span><svg width="16" height="16"><use href="#magn"/></svg><span class="sdiv"></span><i class="dd"></i></div></div>
      <div class="se-body"><div class="tree" id="sol"></div><div class="scrl se-v"><i class="tri u"></i><i class="thumb"></i><i class="tri d"></i></div></div>
      <div class="hs d-flex align-items-center"><i class="tri l"></i><i class="thumb"></i><i class="tri r"></i></div>
      <div class="btabs"><span class="act w126">Solution Explorer</span><span class="w108">Resource View</span></div>
      <div class="pane-title mt10">Properties<i class="dd pale ms-auto"></i><svg width="10" height="14"><use href="#pin"/></svg><svg width="12" height="12"><use href="#pcls"/></svg></div>
      <div class="pdrop d-flex align-items-center justify-content-end"><i class="dd tiny"></i></div>
      <div class="ptools d-flex align-items-center"><svg width="18" height="17" class="me-1"><use href="#cat"/></svg><div class="on azbtn"><svg width="19" height="19"><use href="#az"/></svg></div><i class="vsep ms-1 me-2"></i><svg width="18" height="18" class="dim"><use href="#wrench"/></svg></div>
      <div class="pbody"><div class="plist" id="props"></div><div class="scrl pr-v"><i class="tri u"></i><i class="thumb"></i><i class="tri d"></i></div></div>
      <div class="pdesc"><b class="d-block">BackgroundColor</b><div class="dtxt">Specifies the background color of<br>the item.</div></div>
    </div>
  </div>

  <div class="statusbar d-flex align-items-center"><svg class="s20"><use href="#msg"/></svg><span class="rdy">Ready</span>
    <span class="stright"><svg width="14" height="16"><use href="#arru"/></svg><span>Add to Source Control</span><i class="du"></i><svg width="18" height="17"><use href="#repo"/></svg><span>Select Repository</span><i class="du"></i><span class="position-relative"><svg width="16" height="18"><use href="#bell"/></svg><span class="cnt position-absolute">1</span></span><svg width="10" height="10" fill="#8794c4"><path d="M8 0h2v2H8zM4 4h2v2H4zM8 4h2v2H8zM0 8h2v2H0zM4 8h2v2H4zM8 8h2v2H8z"/></svg></span>
  </div>
  <div class="water position-absolute"><div>Activate Windows</div><div>Go to Settings to activate Windows.</div></div>
</div>

<div class="taskbar">
  <div class="weather position-absolute d-flex align-items-center">
    <svg width="25" height="25" class="me-2"><defs><linearGradient id="sun" x2=".6" y2="1"><stop stop-color="#f7b52c"/><stop offset="1" stop-color="#ee6a10"/></linearGradient></defs><circle cx="12.500" cy="12.500" r="12" fill="url(#sun)"/></svg>
    <div class="ms-1"><div>30°C</div><div class="arab" dir="rtl">مشمس</div></div>
  </div>
  <div class="apps position-absolute d-flex align-items-center">
    <svg width="30" height="30" class="me-3" viewBox="0 0 30 30"><defs><linearGradient id="w11" x2="1" y2="1"><stop stop-color="#4ccbf8"/><stop offset="1" stop-color="#0067c9"/></linearGradient></defs><path fill="url(#w11)" d="M0 1q0-1 1-1h13.400v14.400H0zM15.600 0H29q1 0 1 1v13.400H15.600zM0 15.600h14.400V30H1q-1 0-1-1zM15.600 15.600H30V29q0 1-1 1H15.600z"/></svg>
    <div class="pill d-flex align-items-center"><svg class="mag" width="19" height="20" fill="none" stroke="#222" stroke-width="2"><circle cx="8.500" cy="8.500" r="7"/><path d="M13.500 13.500L18 19"/></svg>Search
      <svg width="63" height="31" viewBox="0 0 63 31" class="ms-auto me-1"><path d="M27 16L38 1l6 6 5-4 13 12v10L50 30H32z" fill="#a892c6"/><path d="M44 7l5-4 13 12-5 3-9-3z" fill="#c59bb4"/><path d="M10 15l8-5 6 2 10-4 8 4 8 4 7 8-6 6H6l-4-8z" fill="#d9a552"/><path d="M30 10l10-1 8 7-6 3z" fill="#eebf73"/><path d="M7 19c8-5 18-4 25-2 6 2 8 5 5 8-5 5-22 5-28 1-3-2-4-5-2-7z" fill="#17b1c5"/><path d="M20 20c6-2 12 0 15 2-5 3-11 2-15-2z" fill="#e0b060"/><path d="M5 12l4 11H1zM38 13l4 17h-8zM33 6l3 11h-6zM60 13l3 12h-6zM54 17l3 9h-6z" fill="#20573f"/><path d="M42 27c5-7 12-7 17-3l-6 6H40z" fill="#cb9345"/></svg>
    </div>
    <div class="applist d-flex">
      <div class="appbox"><svg class="app" viewBox="0 0 30 30"><path d="M0 3q0-1 1-1h10l3 3h15q1 0 1 1v22H0z" fill="#d99a07"/><path d="M0 7h11l3-2h16v23H0z" fill="#fdcb4a"/><path d="M5 29v-6q0-2 2-2h16q2 0 2 2v6z" fill="#0f78cf"/><path d="M9 25h12" stroke="#0a4f96" stroke-width="1.500"/></svg><i></i></div>
      <div class="appbox"><svg class="app" viewBox="0 0 30 30"><path d="M3 4v13c0 3 15 3 15 0V4z" fill="#fbd50a"/><path d="M3 4v14c0 2 5 2 7 2V5z" fill="#fff06a"/><ellipse cx="10.500" cy="4" rx="7.500" ry="3" fill="#eda552"/><path d="M20 2h7v6M2 22v6h7" fill="none" stroke="#43a047" stroke-width="3"/><path d="M14 27l9-10M14 16l12 12M12 19l4-4M20 15l6 3" stroke="#a35fc4" stroke-width="2.300"/></svg></div>
      <div class="appbox"><svg class="app" viewBox="0 0 30 30"><circle cx="15" cy="15" r="15" fill="#fbc116"/><path d="M2 7.500A15 15 0 0 1 28 7.500H15L8.500 18.700z" fill="#e33b2e"/><path d="M2 7.500A15 15 0 0 0 15 30l6.500-11.300H8.500z" fill="#219a46"/><circle cx="15" cy="15" r="7.500" fill="#fff"/><circle cx="15" cy="15" r="5.800" fill="#2f7def"/></svg></div>
      <div class="appbox"><svg class="app" viewBox="0 0 30 30"><circle cx="16" cy="6" r="4.500" fill="#7b83eb"/><circle cx="25" cy="7.500" r="3.300" fill="#5059c9"/><path d="M20 12h10v9c0 5-6 7-9 3z" fill="#5059c9"/><path d="M9 12h14v9c0 10-14 10-14 0z" fill="#7b83eb"/><rect y="8" width="15" height="15" rx="1.500" fill="#4b53bc"/><text x="7.500" y="20" font-size="12" font-weight="700" fill="#fff" text-anchor="middle">T</text></svg></div>
      <div class="appbox"><svg class="app" viewBox="0 0 30 30"><path d="M0 0h30v30H0z" fill="#fb6107"/><path d="M6.500 5v19M10 7v16M13 13v9M17 8v9M20 7v17M23.500 5v19" stroke="#ffe9da" stroke-width="2.200"/><path d="M10 15h10" stroke="#ffe9da" stroke-width="3"/></svg></div>
      <div class="appbox live"><svg class="app" viewBox="0 0 30 30"><path d="M0 8l4-2 18 18-0 6L4 24l-4-2z" fill="#6b4698"/><path d="M4 24l18-18V0L0 19v3z" fill="#8b5fc4"/><path d="M4 6l18 18v6L0 10V8z" fill="#a67de0"/><path d="M22 0l8 4v22l-8 4z" fill="#c495f7"/><path d="M0 10l4 5-4 5z" fill="#5d3b87"/></svg><i></i></div>
      <div class="appbox"><svg class="app" viewBox="0 0 30 30"><defs><linearGradient id="cpa" x1="0" y1="0" x2="0" y2="1"><stop stop-color="#2292e8"/><stop offset=".5" stop-color="#3dbb74"/><stop offset="1" stop-color="#f3d321"/></linearGradient><linearGradient id="cpb" x1="1" y1="0" x2="0" y2="1"><stop stop-color="#a445e8"/><stop offset=".5" stop-color="#f0557f"/><stop offset="1" stop-color="#fb9d45"/></linearGradient></defs><path d="M8 1h12c2 0 2 2 3 5l-7 1-4 11c-1 3-3 3-6 3-6 0-7-3-5-9l3-8c1-2 2-3 4-3z" fill="url(#cpa)"/><path d="M14 1h6c2 0 2 2 4 7h-8z" fill="#1d48c7"/><path d="M22 28H11c-2 0-3-2-4-5l6-1 5-11c1-3 3-3 6-3 6 0 7 3 5 9l-3 8c-1 2-2 3-4 3z" fill="url(#cpb)"/></svg></div>
      <div class="appbox"><svg class="app" viewBox="0 0 30 30"><path d="M0 0h30v30H0z" fill="#0a78d4"/><path d="M16 0h10v30H16z" fill="#d99b13"/><path d="M9 7h10v23H9z" fill="#edbf38"/><path d="M3 15h10v15H3z" fill="#fbdf6b"/></svg></div>
      <div class="appbox"><svg class="app" viewBox="0 0 30 30"><defs><linearGradient id="edg" x1="0" x2="1"><stop stop-color="#1783d8"/><stop offset=".6" stop-color="#35c1e0"/><stop offset="1" stop-color="#66e05c"/></linearGradient></defs><circle cx="15" cy="15" r="15" fill="#0f6cbd"/><path d="M0 14C1 5 7 0 15 0c9 0 15 6 15 12 0 5-4 8-8 8-3 0-4-1-3-3 2-4-2-8-7-8C6 9 1 12 0 14z" fill="url(#edg)"/><path d="M12 10c-7 7-1 17 8 17 3 0 6-1 8-3-4 8-17 8-22 0C3 19 6 12 12 10z" fill="#0c4a94"/><path d="M15 13c-4 5 2 11 12 8-4 4-14 3-14-4z" fill="#e7edf7"/></svg></div>
      <div class="appbox"><svg class="app" viewBox="0 0 30 30"><path d="M0 0h30v30H0z" fill="#c7170f"/><path d="M0 20h30v10H0z" fill="#a5120c"/><path d="M14 0c9 4 14 12 16 20M30 2C26 5 22 11 19 19" fill="none" stroke="#fff" stroke-width="2"/><text x="4" y="17" font-size="8" fill="#fff">PDF</text><text x="4" y="27" font-size="4.500" fill="#fff">View &amp; Edit</text></svg><i></i></div>
    </div>
  </div>
  <div class="tray position-absolute tgrid">
    <svg width="15" height="9" fill="none" stroke="#222" stroke-width="1.600"><path d="M1 8l6.500-6.500L14 8"/></svg>
    <span>ENG</span>
    <svg width="21" height="16" viewBox="0 0 21 16" fill="none" stroke="#222" stroke-width="1.500"><path d="M1 6c5-6 14-6 19 0M4 9c4-4 9-4 13 0M7 12c2-2 5-2 7 0"/><circle cx="10.500" cy="14" r="1.300" fill="#222"/></svg>
    <svg width="20" height="16" viewBox="0 0 20 16" fill="none" stroke="#222" stroke-width="1.400"><path d="M1 5.500h3L8.500 1.500v13L4 10.500H1zM11 5c1.500 2 1.500 4 0 6M13.500 3c3 3 3 7 0 10"/><path d="M16 1c4 4 4 10 0 14" stroke="#aaa"/></svg>
    <svg width="21" height="14" viewBox="0 0 21 14" fill="none" stroke="#222" stroke-width="1.500"><rect x=".8" y=".8" width="17" height="12" rx="3"/><path d="M4.500 4v6" stroke-width="2.500"/><path d="M19.500 5v4" stroke-width="2"/></svg>
    <svg class="order-last" width="17" height="19" viewBox="0 0 17 19" fill="none" stroke="#222" stroke-width="1.400"><path d="M9 1.500C5 1 3 4 3 7v4l-2 3.500h14L13 11V9M6 15c0 3 4 3 4 0M6 7h4l-4 4.500h4M11.500 1H16l-4.500 5H16"/></svg>
    <div class="clk">11:23 AM<br>9/3/2024</div>
  </div>
</div>

<script>
const use = (id, w, h, cls) => `<svg width="${w}" height="${h}" class="${cls || ''}"><use href="#${id}"/></svg>`;
const folderRow = (x, ic, name) => `<div class="tnode"><span class="exp">${x ? use(x, 10, x == 'xc' ? 12 : 10) : ''}</span>${use(ic, 19, 18, 'fold')}${name}</div>`;
const kids = ['Execution Time','Language','Overall Page Number','Overall Total Pages','Page Name','Page Number','Render Format IsInteractive','Render Format Name','Report Folder','Report Name','Report Server URL','Total Pages','User ID'];
fields.innerHTML = folderRow('xo','fopen','Built-in Fields') +
  kids.map((k, i) => `<div class="tnode kid${i ? '' : ' sel'}">${use('field', 10, 17)}${k}</div>`).join('') +
  folderRow('','fold','Parameters') + folderRow('','fold','Images') + folderRow('xc','fold','Data Sources') + folderRow('xc','fold','Datasets');
const leaf = (ic, n, s) => `<div class="tnode kid${s ? ' sel' : ''}">${use(ic, 17, 18)}${n}</div>`;
sol.innerHTML = folderRow('xo','fopen','Shared Data Sources') + leaf('db','northwindDWH.rds') + leaf('db','NW DWH.rds') + folderRow('','fold','Shared Datasets') +
  folderRow('xo','fopen','Reports') + leaf('rdl','Customers Orders.rdl',1) + leaf('rdl','Employee Performance.rdl') + leaf('rdl','ProductDetails.rdl') + leaf('rdl','ShipperPerformance.rdl') + leaf('rdl','Supplier_Info.rdl');
props.innerHTML = [['','BackgroundColor','',0,'#fff'],['+','BackgroundImage',''],['','Bookmark',''],['+','BorderColor','LightGrey',1],['+','BorderStyle','None, , , , Solid',1],['+','BorderWidth','1pt'],['','Calendar','Default'],['','CanGrow','True'],['','CanShrink','False'],['','Color','CornflowerBlue',1,'#6495ed'],['','DataElementName',''],['','DataElementOutput','Auto'],['','DataElementStyle','Auto'],['','Direction','Default']]
  .map(([p, n, v, b, c]) => `<div class="prow"><div>${p ? '<div class="plus"></div>' : ''}</div><div class="n">${n}</div><div class="v${b ? ' b' : ''}">${c ? `<span class="sw" style="background:${c}"></span>` : ''}${v}</div></div>`).join('');
</script>
</body>
</html>
